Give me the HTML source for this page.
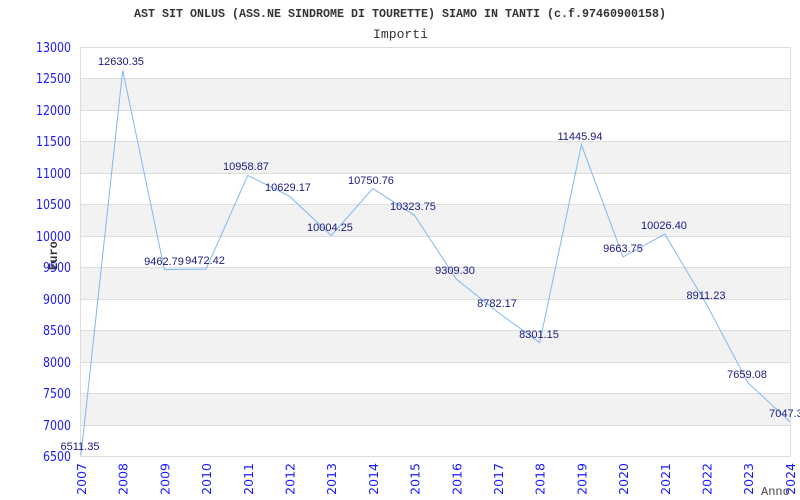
<!DOCTYPE html>
<html><head><meta charset="utf-8"><style>
html,body{margin:0;padding:0;background:#fff;width:800px;height:500px;overflow:hidden}
svg{display:block}
.yl{font-family:"DejaVu Sans","Liberation Sans",sans-serif;font-size:13px;fill:#1a1aff;text-anchor:end}
.xl{font-family:"DejaVu Sans","Liberation Sans",sans-serif;font-size:12.5px;fill:#1a1aff;text-anchor:end}
.v{font-family:"Liberation Sans",sans-serif;font-size:11px;fill:#1a1a80;text-anchor:middle}
</style></head><body>
<svg width="800" height="500" xmlns="http://www.w3.org/2000/svg">
<text x="134" y="17" font-family="Liberation Mono,monospace" font-weight="bold" font-size="12" fill="#333" textLength="532" lengthAdjust="spacingAndGlyphs">AST SIT ONLUS (ASS.NE SINDROME DI TOURETTE) SIAMO IN TANTI (c.f.97460900158)</text>
<text x="373" y="38" font-family="Liberation Mono,monospace" font-size="13" fill="#333" textLength="55" lengthAdjust="spacingAndGlyphs">Importi</text>
<g fill="#f2f2f2">
<rect x="80" y="78.5" width="710" height="31.5"/>
<rect x="80" y="141.5" width="710" height="31.5"/>
<rect x="80" y="204.5" width="710" height="31.5"/>
<rect x="80" y="267.5" width="710" height="31.5"/>
<rect x="80" y="330.5" width="710" height="31.5"/>
<rect x="80" y="393.5" width="710" height="31.5"/>
</g>
<g stroke="#ddd" stroke-width="1">
<line x1="80" y1="47.5" x2="790" y2="47.5"/><line x1="80" y1="78.5" x2="790" y2="78.5"/>
<line x1="80" y1="110.5" x2="790" y2="110.5"/><line x1="80" y1="141.5" x2="790" y2="141.5"/>
<line x1="80" y1="173.5" x2="790" y2="173.5"/><line x1="80" y1="204.5" x2="790" y2="204.5"/>
<line x1="80" y1="236.5" x2="790" y2="236.5"/><line x1="80" y1="267.5" x2="790" y2="267.5"/>
<line x1="80" y1="299.5" x2="790" y2="299.5"/><line x1="80" y1="330.5" x2="790" y2="330.5"/>
<line x1="80" y1="362.5" x2="790" y2="362.5"/><line x1="80" y1="393.5" x2="790" y2="393.5"/>
<line x1="80" y1="425.5" x2="790" y2="425.5"/><line x1="80" y1="456.5" x2="790" y2="456.5"/>
<line x1="80.5" y1="47" x2="80.5" y2="457"/><line x1="790.5" y1="47" x2="790.5" y2="457"/>
</g>
<g>
<text class="yl" x="71" y="52" textLength="35" lengthAdjust="spacingAndGlyphs">13000</text><text class="yl" x="71" y="83" textLength="35" lengthAdjust="spacingAndGlyphs">12500</text>
<text class="yl" x="71" y="115" textLength="35" lengthAdjust="spacingAndGlyphs">12000</text><text class="yl" x="71" y="146" textLength="35" lengthAdjust="spacingAndGlyphs">11500</text>
<text class="yl" x="71" y="178" textLength="35" lengthAdjust="spacingAndGlyphs">11000</text><text class="yl" x="71" y="209" textLength="35" lengthAdjust="spacingAndGlyphs">10500</text>
<text class="yl" x="71" y="241" textLength="35" lengthAdjust="spacingAndGlyphs">10000</text><text class="yl" x="71" y="272" textLength="28" lengthAdjust="spacingAndGlyphs">9500</text>
<text class="yl" x="71" y="304" textLength="28" lengthAdjust="spacingAndGlyphs">9000</text><text class="yl" x="71" y="335" textLength="28" lengthAdjust="spacingAndGlyphs">8500</text>
<text class="yl" x="71" y="367" textLength="28" lengthAdjust="spacingAndGlyphs">8000</text><text class="yl" x="71" y="398" textLength="28" lengthAdjust="spacingAndGlyphs">7500</text>
<text class="yl" x="71" y="430" textLength="28" lengthAdjust="spacingAndGlyphs">7000</text><text class="yl" x="71" y="461" textLength="28" lengthAdjust="spacingAndGlyphs">6500</text>
</g>
<text x="0" y="0" transform="translate(57,270) rotate(-90)" font-family="Liberation Mono,monospace" font-weight="bold" font-size="12" fill="#333">Euro</text>
<polyline fill="none" stroke="#7fb8f5" stroke-width="1" points="81,455.3 122.7,70.3 164.4,269.6 206.1,269 247.8,175.4 289.5,196.2 331.2,235.5 372.9,188.5 414.6,215.4 456.3,279.2 498,312.4 539.7,342.6 581.4,144.8 623.1,256.9 664.8,234.1 706.5,304.3 748.2,383.1 789.9,421.6"/>
<g>
<text class="v" x="80" y="450">6511.35</text>
<text class="v" x="121" y="65">12630.35</text>
<text class="v" x="164" y="265">9462.79</text>
<text class="v" x="205" y="264">9472.42</text>
<text class="v" x="246" y="170">10958.87</text>
<text class="v" x="288" y="191">10629.17</text>
<text class="v" x="330" y="231">10004.25</text>
<text class="v" x="371" y="184">10750.76</text>
<text class="v" x="413" y="210">10323.75</text>
<text class="v" x="455" y="274">9309.30</text>
<text class="v" x="497" y="307">8782.17</text>
<text class="v" x="539" y="338">8301.15</text>
<text class="v" x="580" y="140">11445.94</text>
<text class="v" x="623" y="252">9663.75</text>
<text class="v" x="664" y="229">10026.40</text>
<text class="v" x="706" y="299">8911.23</text>
<text class="v" x="747" y="378">7659.08</text>
<text class="v" x="789" y="417">7047.35</text>
</g>
<g>
<text class="xl" transform="translate(86,463) rotate(-90)">2007</text>
<text class="xl" transform="translate(127.7,463) rotate(-90)">2008</text>
<text class="xl" transform="translate(169.4,463) rotate(-90)">2009</text>
<text class="xl" transform="translate(211.1,463) rotate(-90)">2010</text>
<text class="xl" transform="translate(252.8,463) rotate(-90)">2011</text>
<text class="xl" transform="translate(294.5,463) rotate(-90)">2012</text>
<text class="xl" transform="translate(336.2,463) rotate(-90)">2013</text>
<text class="xl" transform="translate(377.9,463) rotate(-90)">2014</text>
<text class="xl" transform="translate(419.6,463) rotate(-90)">2015</text>
<text class="xl" transform="translate(461.3,463) rotate(-90)">2016</text>
<text class="xl" transform="translate(503,463) rotate(-90)">2017</text>
<text class="xl" transform="translate(544.7,463) rotate(-90)">2018</text>
<text class="xl" transform="translate(586.4,463) rotate(-90)">2019</text>
<text class="xl" transform="translate(628.1,463) rotate(-90)">2020</text>
<text class="xl" transform="translate(669.8,463) rotate(-90)">2021</text>
<text class="xl" transform="translate(711.5,463) rotate(-90)">2022</text>
<text class="xl" transform="translate(753.2,463) rotate(-90)">2023</text>
<text class="xl" transform="translate(794.9,463) rotate(-90)">2024</text>
</g>
<text x="761" y="495" font-family="Liberation Mono,monospace" font-size="12" fill="#444">Anno</text>
</svg>
</body></html>
